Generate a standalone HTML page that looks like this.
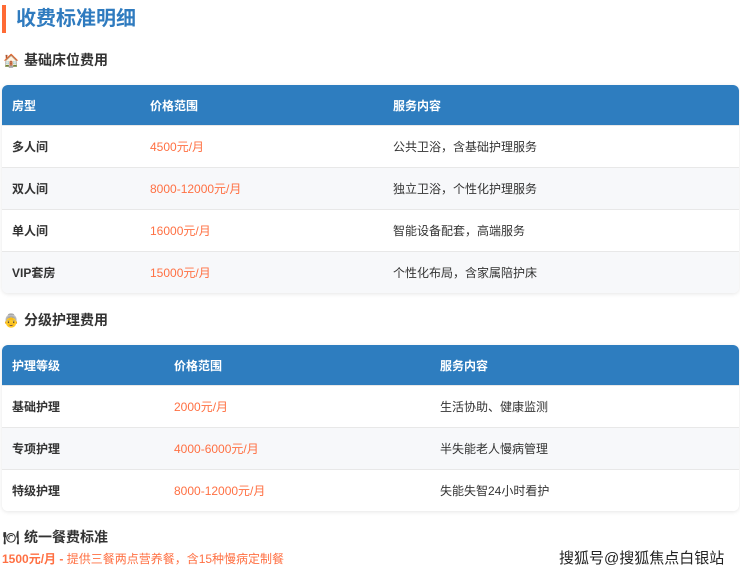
<!DOCTYPE html>
<html><head><meta charset="utf-8"><style>
*{margin:0;padding:0;box-sizing:border-box}
body{width:740px;height:572px;background:#fff;font-family:"Liberation Sans","Noto Sans CJK SC",sans-serif;position:relative;overflow:hidden;color:#333}
.title{position:absolute;left:2px;top:5px;height:28px;border-left:4px solid #ff6b35;padding-left:10px;font-size:20px;font-weight:bold;color:#2f7bbf;line-height:28px}
.h{position:absolute;left:3px;font-size:14px;font-weight:bold;color:#333;line-height:20px}
.h span{display:inline-block;width:16px;margin-right:5px;font-size:13px}
table{position:absolute;left:2px;width:737px;border-collapse:collapse;border-radius:6px;overflow:hidden;box-shadow:0 1px 4px rgba(0,0,0,.1);font-size:12px}
th{background:#2e7dbf;color:#fff;text-align:left;font-weight:bold;height:40px;padding:0 0 0 10px}
td{height:42px;padding:0 0 0 10px;border:0;color:#333;background:linear-gradient(#e8e8e8,#e8e8e8) top/100% 1px no-repeat #fff}
tr:nth-child(odd) td{background:linear-gradient(#e8e8e8,#e8e8e8) top/100% 1px no-repeat #f7f8fa}
td:first-child{font-weight:bold}
td.p{color:#ff7043}
.foot{position:absolute;left:2px;top:551px;font-size:12px;color:#ff7043;line-height:16px}
.wm{position:absolute;left:559px;top:547px;font-size:15px;color:#222;letter-spacing:0}
</style></head><body>
<div class="title">收费标准明细</div>
<div class="h" style="top:50px"><span>🏠</span>基础床位费用</div>
<table style="top:85px">
<tr><th style="width:138px">房型</th><th style="width:243px">价格范围</th><th>服务内容</th></tr>
<tr><td>多人间</td><td class="p">4500元/月</td><td>公共卫浴，含基础护理服务</td></tr>
<tr><td>双人间</td><td class="p">8000-12000元/月</td><td>独立卫浴，个性化护理服务</td></tr>
<tr><td>单人间</td><td class="p">16000元/月</td><td>智能设备配套，高端服务</td></tr>
<tr><td>VIP套房</td><td class="p">15000元/月</td><td>个性化布局，含家属陪护床</td></tr>
</table>
<div class="h" style="top:310px"><span>👵</span>分级护理费用</div>
<table style="top:345px">
<tr><th style="width:162px">护理等级</th><th style="width:266px">价格范围</th><th>服务内容</th></tr>
<tr><td>基础护理</td><td class="p">2000元/月</td><td>生活协助、健康监测</td></tr>
<tr><td>专项护理</td><td class="p">4000-6000元/月</td><td>半失能老人慢病管理</td></tr>
<tr><td>特级护理</td><td class="p">8000-12000元/月</td><td>失能失智24小时看护</td></tr>
</table>
<div class="h" style="top:527px"><span>🍽</span>统一餐费标准</div>
<div class="foot"><b>1500元/月 -</b> 提供三餐两点营养餐，含15种慢病定制餐</div>
<div class="wm">搜狐号@搜狐焦点白银站</div>
</body></html>
